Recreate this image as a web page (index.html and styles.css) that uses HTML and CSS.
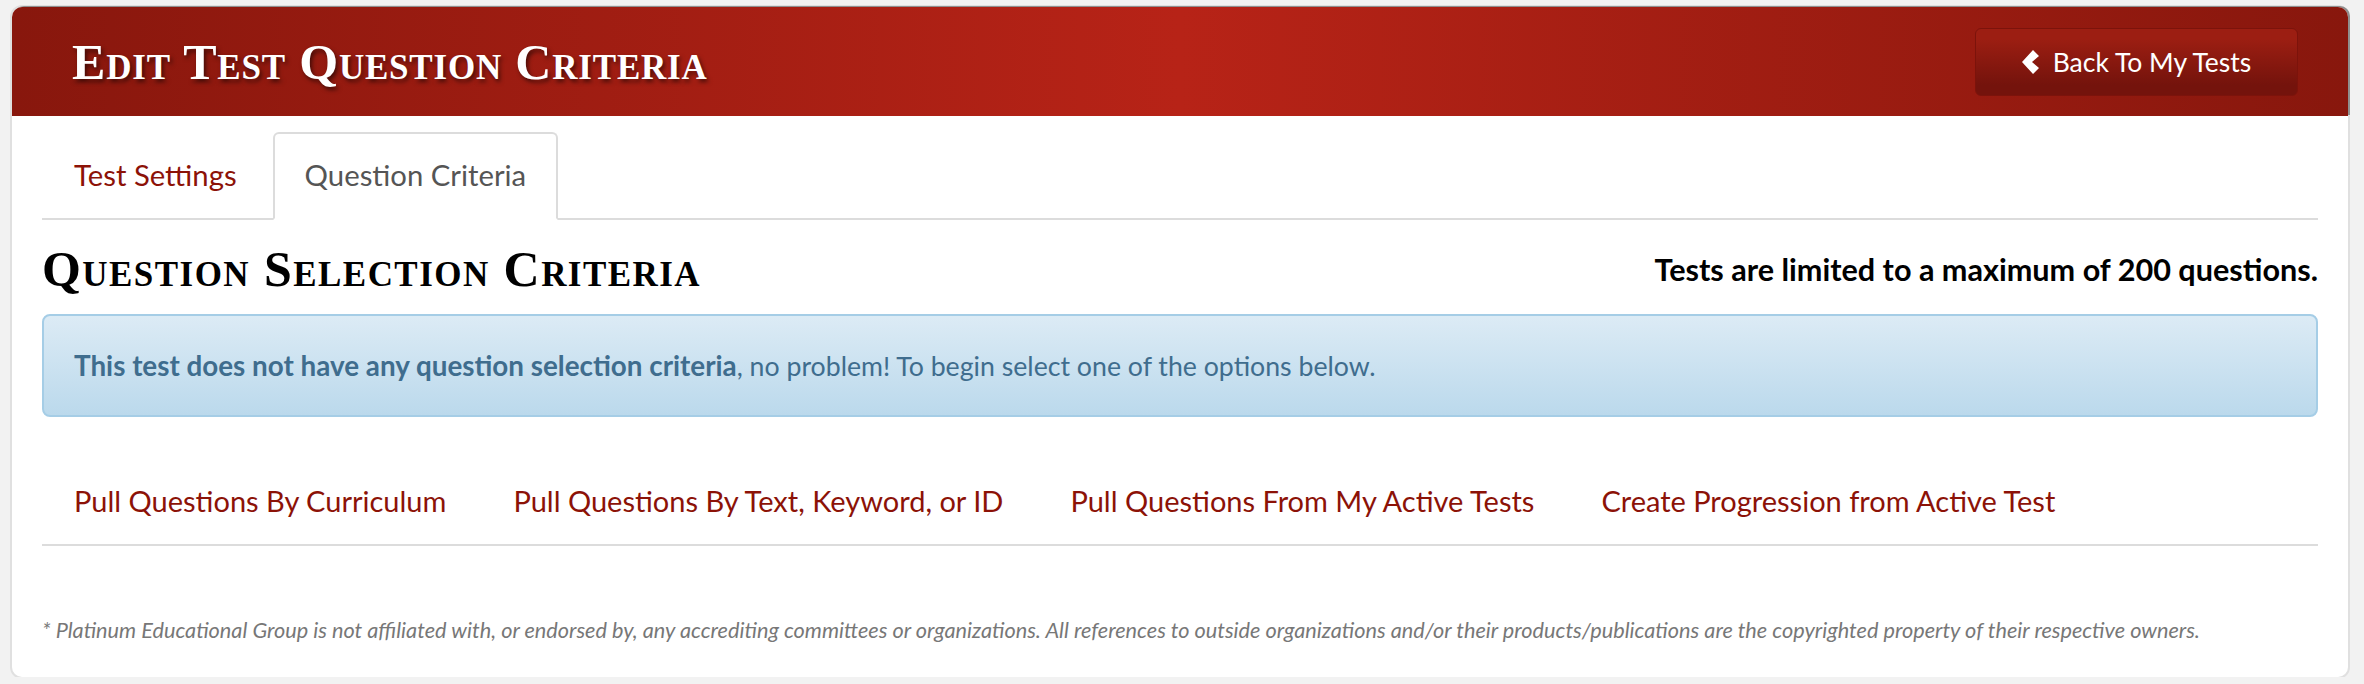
FILE: index.html
```html
<!DOCTYPE html>
<html lang="en">
<head>
    <meta charset="UTF-8">
    <title>Edit Test Question Criteria</title>
    <link rel="stylesheet" href="styles.css">
</head>
<body>
    <div class="panel">
        <div class="panel-header">
            <h1>Edit Test Question Criteria</h1>
            <a class="back-btn" href="#">
                <svg class="chevron" viewBox="0 0 18 26" width="18" height="26"><polygon points="0,13 11,1 17,7 10,13 17,19 11,25" fill="#fff"/></svg>
                Back To My Tests
            </a>
        </div>
        <div class="panel-body">
            <ul class="tabs">
                <li><a href="#">Test Settings</a></li>
                <li class="active"><a href="#">Question Criteria</a></li>
            </ul>
            <div class="title-row">
                <h2>Question Selection Criteria</h2>
                <span class="limit">Tests are limited to a maximum of 200 questions.</span>
            </div>
            <div class="alert"><p><strong>This test does not have any question selection criteria</strong>, no problem! To begin select one of the options below.</p></div>
            <ul class="options">
                <li><a href="#">Pull Questions By Curriculum</a></li>
                <li><a href="#">Pull Questions By Text, Keyword, or ID</a></li>
                <li><a href="#">Pull Questions From My Active Tests</a></li>
                <li><a href="#">Create Progression from Active Test</a></li>
            </ul>
            <p class="note">* Platinum Educational Group is not affiliated with, or endorsed by, any accrediting committees or organizations. All references to outside organizations and/or their products/publications are the copyrighted property of their respective owners.</p>
        </div>
    </div>
</body>
</html>
```

FILE: styles.css
```css
body {
    margin: 0;
    padding: 7px 16px 0 12px;
    background-color: #f2f2f2;
    font-family: "Lato", "Noto Sans", sans-serif;
    color: #333;
}

a {
    text-decoration: none;
    color: #8c1207;
}

ul {
    list-style: none;
    margin: 0;
    padding: 0;
}

.panel {
    background-color: #fff;
    border-radius: 10px;
    box-shadow: 0 0 0 2px #e0e0e0;
    height: 670px;
}

.panel-header {
    height: 109px;
    box-sizing: border-box;
    padding: 0 50px 0 60px;
    display: flex;
    justify-content: space-between;
    align-items: center;
    border-radius: 10px 10px 0 0;
    box-shadow: 2px -1px 0 #8f8f8f;
    background: linear-gradient(to right, #88170d 0%, #b72317 50%, #88170d 100%);
}

h1 {
    margin: 0;
    font-family: "Liberation Serif", serif;
    font-variant: small-caps;
    font-size: 50px;
    letter-spacing: 0.8px;
    font-weight: 700;
    color: #fff;
    text-shadow: 2px 3px 4px rgba(0, 0, 0, 0.55);
}

.back-btn {
    width: 323px;
    height: 68px;
    box-sizing: border-box;
    display: flex;
    align-items: center;
    justify-content: center;
    gap: 13px;
    font-size: 26.5px;
    color: #fff;
    border: 1px solid #7c130b;
    border-radius: 6px;
    background: linear-gradient(to bottom, #9c1e12 15%, #74130c 85%);
}

.panel-body {
    padding: 16px 30px 0;
}

.tabs {
    display: flex;
    gap: 4px;
    height: 88px;
    box-sizing: border-box;
    border-bottom: 2px solid #dcdcdc;
}

.tabs a {
    display: block;
    height: 88px;
    box-sizing: border-box;
    padding: 23px 30px 0;
    font-size: 29.3px;
    border: 2px solid transparent;
    border-radius: 6px 6px 0 0;
}

.tabs .active a {
    color: #555;
    background-color: #fff;
    border-color: #dcdcdc;
    border-bottom-color: #fff;
}

.title-row {
    display: flex;
    justify-content: space-between;
    align-items: center;
    height: 94px;
    padding-top: 4px;
    box-sizing: border-box;
}

h2 {
    margin: 0;
    font-family: "Liberation Serif", serif;
    font-variant: small-caps;
    font-size: 50px;
    letter-spacing: 1.45px;
    font-weight: 700;
    color: #000;
}

.limit {
    font-size: 30.6px;
    font-weight: 700;
    color: #000;
}

.alert {
    height: 103px;
    box-sizing: border-box;
    padding: 0 30px;
    display: flex;
    align-items: center;
    font-size: 26.7px;
    color: #3f6d8e;
    border: 2px solid #a5cde6;
    border-radius: 8px;
    background: linear-gradient(to bottom, #dcebf5, #bbd9ec);
}

.alert p {
    margin: 0;
}

.alert strong {
    font-size: 27.8px;
}

.options {
    display: flex;
    gap: 67px;
    height: 129px;
    box-sizing: border-box;
    padding: 66px 0 0 32px;
    border-bottom: 2px solid #dcdcdc;
    font-size: 29px;
}

.note {
    margin: 71px 0 0;
    font-size: 21.7px;
    font-style: italic;
    color: #777;
    white-space: nowrap;
}
```
